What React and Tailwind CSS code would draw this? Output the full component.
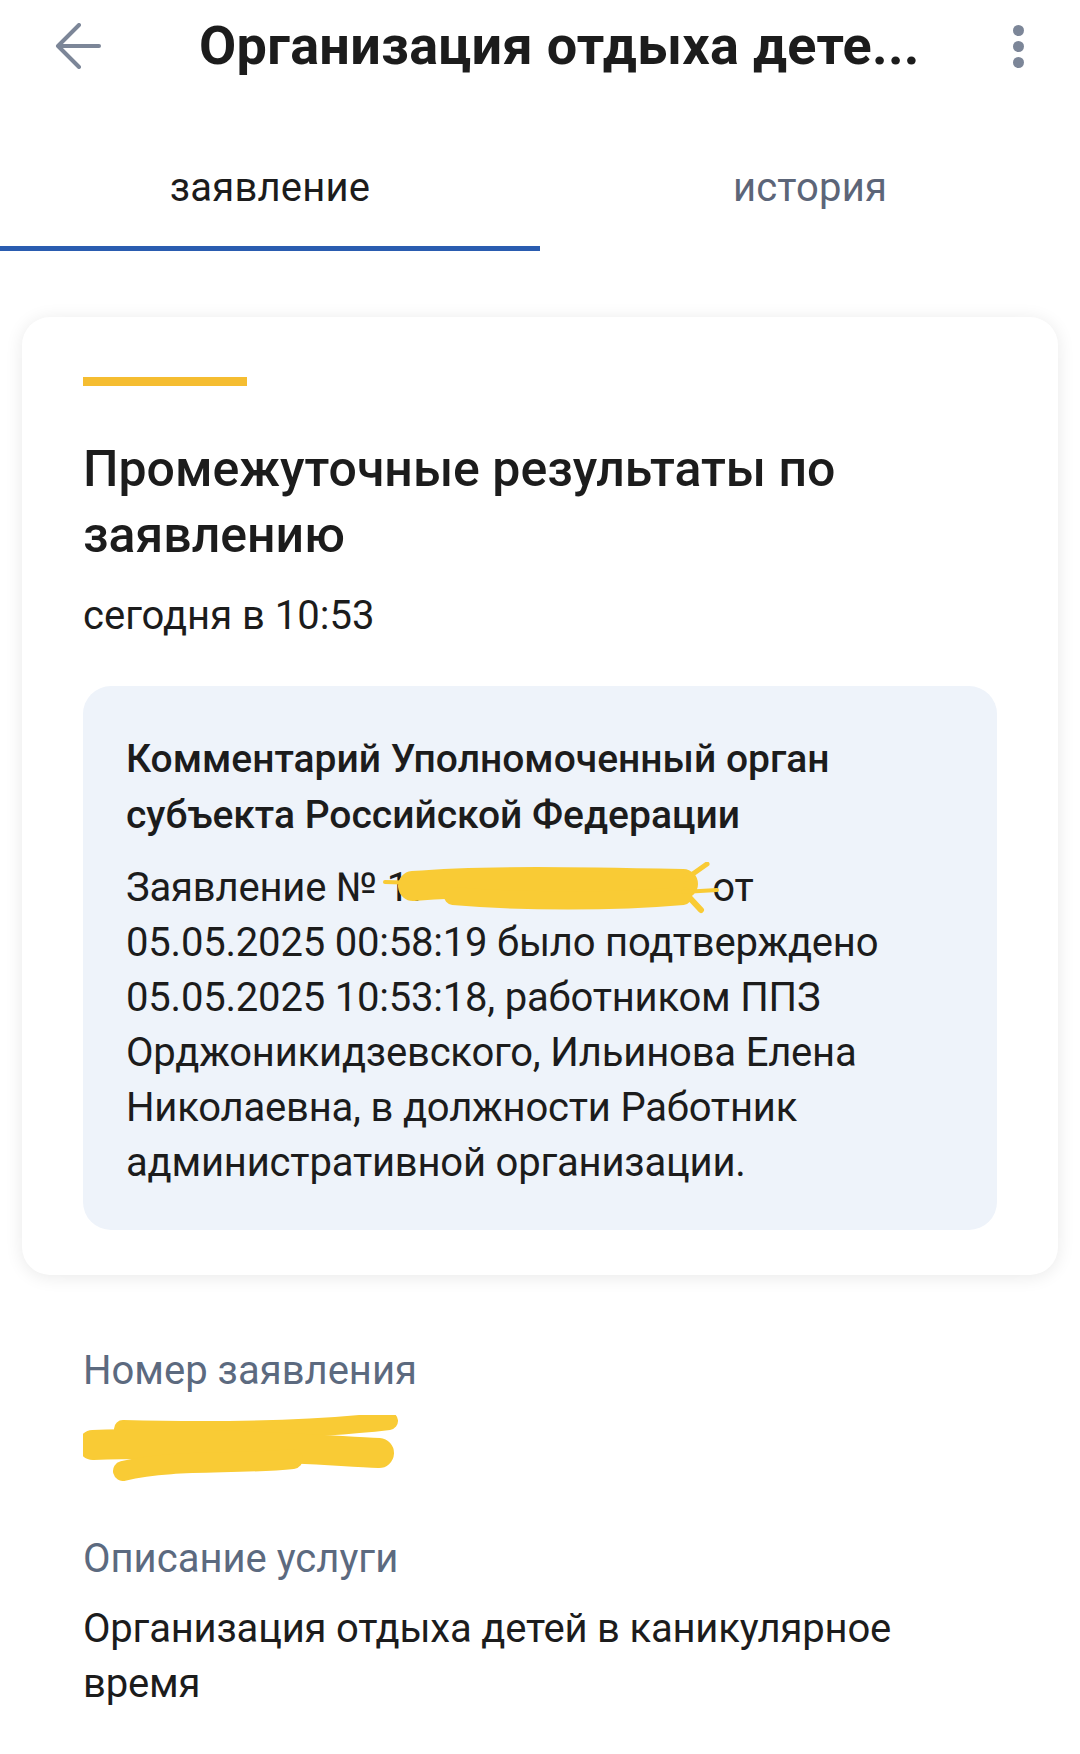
import React from 'react';

function BackArrow() {
  return (
    <svg width="46" height="46" viewBox="0 0 46 46" fill="none">
      <path d="M44 23H4" stroke="#7c8698" strokeWidth="4" strokeLinecap="round" />
      <path d="M24 2L3 23l21 21" stroke="#7c8698" strokeWidth="4" strokeLinecap="round" strokeLinejoin="round" />
    </svg>
  );
}

function ScribbleInline() {
  return (
    <svg className="absolute left-[-4px] top-[2px]" width="336" height="52" viewBox="0 0 336 52" fill="none">
      <path d="M2 20L70 22" stroke="#f9cb35" strokeWidth="4" strokeLinecap="round" />
      <path d="M30 24C100 18 200 20 300 22" stroke="#f9cb35" strokeWidth="30" strokeLinecap="round" />
      <path d="M70 34C140 40 230 40 300 34" stroke="#f9cb35" strokeWidth="18" strokeLinecap="round" />
      <path d="M290 26L324 2" stroke="#f9cb35" strokeWidth="5" strokeLinecap="round" />
      <path d="M292 20L318 48" stroke="#f9cb35" strokeWidth="6" strokeLinecap="round" />
      <path d="M300 30L334 28" stroke="#f9cb35" strokeWidth="4" strokeLinecap="round" />
    </svg>
  );
}

function ScribbleNumber() {
  return (
    <svg width="320" height="66" viewBox="0 0 320 66" fill="none">
      <path d="M40 14C120 16 220 16 306 6" stroke="#f9cb35" strokeWidth="18" strokeLinecap="round" />
      <path d="M10 30C110 26 220 34 296 38" stroke="#f9cb35" strokeWidth="30" strokeLinecap="round" />
      <path d="M40 56C90 44 150 50 210 44" stroke="#f9cb35" strokeWidth="20" strokeLinecap="round" />
    </svg>
  );
}

export default function App() {
  return (
    <div className="min-h-screen bg-white font-['Roboto','Noto_Sans',sans-serif] text-[#1c1c1c]">
      {/* Header */}
      <div className="flex h-[92px] items-center pl-[55px] pr-[56px]">
        <button className="flex h-[46px] w-[46px] items-center justify-center">
          <BackArrow />
        </button>
        <h1 className="ml-[98px] flex-1 whitespace-nowrap text-[54px] font-bold leading-[60px] tracking-[0.3px]">
          Организация отдыха дете...
        </h1>
        <div className="flex flex-col items-center gap-[5px]">
          <span className="h-[11px] w-[11px] rounded-full bg-[#7c8698]" />
          <span className="h-[11px] w-[11px] rounded-full bg-[#7c8698]" />
          <span className="h-[11px] w-[11px] rounded-full bg-[#7c8698]" />
        </div>
      </div>

      {/* Tabs */}
      <div className="grid grid-cols-2">
        <div className="border-b-[5px] border-[#2a5cb0] pb-[34px] pt-[72px] text-center text-[40px] leading-[48px] tracking-[0.2px]">
          заявление
        </div>
        <div className="border-b-[5px] border-transparent pb-[34px] pt-[72px] text-center text-[40px] leading-[48px] tracking-[0.2px] text-[#5c6578]">
          история
        </div>
      </div>

      {/* Result card */}
      <div className="mx-[22px] mt-[66px] rounded-[28px] bg-white px-[61px] pb-[45px] pt-[60px] shadow-[0_2px_18px_rgba(0,0,0,0.09)]">
        <div className="h-[9px] w-[164px] bg-[#f5bd31]" />
        <h2 className="mt-[50px] text-[50px] font-medium leading-[66px]">
          Промежуточные результаты по заявлению
        </h2>
        <p className="mt-[20px] text-[40px] leading-[56px]">сегодня в 10:53</p>

        <div className="mt-[42px] rounded-[28px] bg-[#eef3fa] pb-[40px] pl-[43px] pr-[40px] pt-[45px]">
          <h3 className="text-[39px] font-medium leading-[56px]">
            Комментарий Уполномоченный орган субъекта Российской Федерации
          </h3>
          <p className="mt-[17px] text-[40px] leading-[55px] tracking-[-0.2px]">
            Заявление №{' '}
            <span className="relative inline-block w-[316px]">
              17
              <ScribbleInline />
            </span>{' '}
            от
            <br />
            05.05.2025 00:58:19 было подтверждено 05.05.2025 10:53:18, работником ППЗ Орджоникидзевского, Ильинова
            Елена Николаевна, в должности Работник административной организации.
          </p>
        </div>
      </div>

      {/* Details */}
      <div className="px-[83px] pb-[40px]">
        <div className="mt-[68px] text-[40px] leading-[56px] text-[#5c6a7f]">Номер заявления</div>
        <div className="pb-[50px] pt-[16px]">
          <ScribbleNumber />
        </div>
        <div className="text-[40px] leading-[56px] text-[#5c6a7f]">Описание услуги</div>
        <p className="mt-[14px] max-w-[880px] text-[40px] leading-[55px] tracking-[-0.2px]">
          Организация отдыха детей в каникулярное время
        </p>
      </div>
    </div>
  );
}
